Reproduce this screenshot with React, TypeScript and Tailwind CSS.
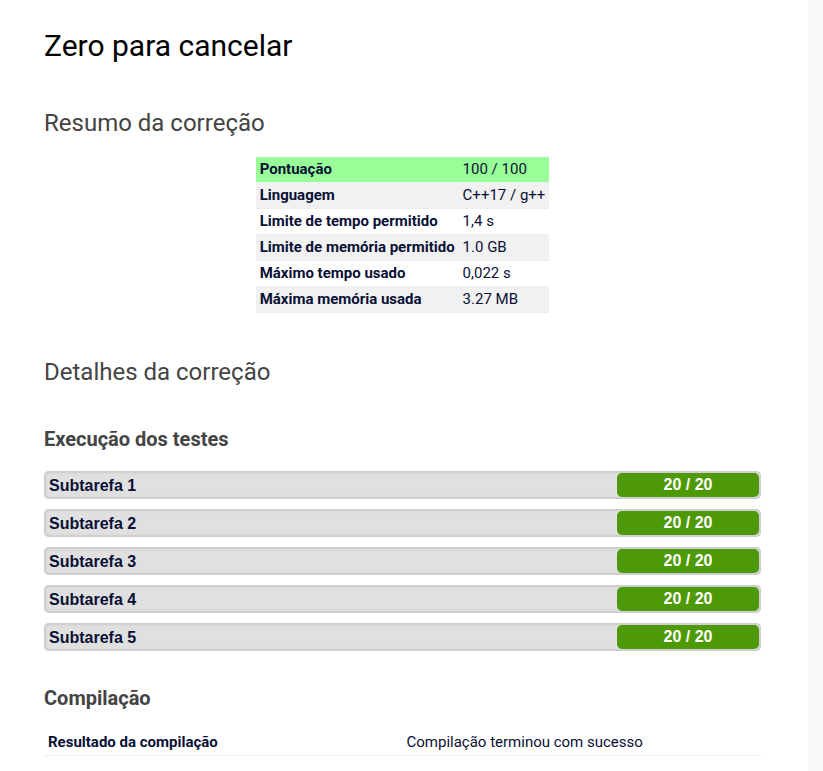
const summary = [
  { label: 'Pontuação', value: '100 / 100', row: 'bg-[#99ff99]', line: 'border-[#f1f1f1]' },
  { label: 'Linguagem', value: 'C++17 / g++', row: 'bg-[#f1f1f1]', line: 'border-[#eeeeee]' },
  { label: 'Limite de tempo permitido', value: '1,4 s', row: 'bg-white', line: 'border-[#eeeeee]' },
  { label: 'Limite de memória permitido', value: '1.0 GB', row: 'bg-[#f1f1f1]', line: 'border-[#eeeeee]' },
  { label: 'Máximo tempo usado', value: '0,022 s', row: 'bg-white', line: 'border-[#eeeeee]' },
  { label: 'Máxima memória usada', value: '3.27 MB', row: 'bg-[#f1f1f1]', line: 'border-[#eeeeee]' },
];

const subtasks = [1, 2, 3, 4, 5];

function Subtask({ number }: { number: number }) {
  return (
    <li className="flex h-7 items-center justify-between rounded-[5px] bg-[#e0e0e0] p-0.5 pl-[5px] font-['Liberation_Sans',sans-serif] text-base font-bold shadow-[inset_0_0_2px_2px_#cccccc]">
      <span className="pt-0.5 leading-6">Subtarefa {number}</span>
      <span className="h-6 w-1/5 rounded-[5px] bg-[#4e9a06] text-center leading-6 text-white">20 / 20</span>
    </li>
  );
}

export default function App() {
  return (
    <div className="min-h-screen bg-[#f8f8f8] pr-[15px] font-[Roboto,sans-serif] text-[15px] text-[#0a1035]">
      <main className="min-h-screen bg-white pt-6 pr-[47px] pb-[15px] pl-11">
        <h1 className="text-3xl leading-11 text-black">Zero para cancelar</h1>

        <h2 className="mt-[37px] text-2xl leading-9 text-[#444444]">Resumo da correção</h2>
        <table className="mx-auto mt-4 border-separate border-spacing-0">
          <tbody>
            {summary.map((item) => (
              <tr key={item.label} className={item.row}>
                <th scope="row" className={`border-b px-1 text-left leading-[25px] font-bold ${item.line}`}>
                  {item.label}
                </th>
                <td className={`border-b px-1 leading-[25px] ${item.line}`}>{item.value}</td>
              </tr>
            ))}
          </tbody>
        </table>

        <h2 className="mt-[41px] text-2xl leading-9 text-[#444444]">Detalhes da correção</h2>
        <h3 className="mt-[35px] text-xl leading-7 font-bold text-[#444444]">Execução dos testes</h3>
        <ul className="mt-[18px] flex flex-col gap-2.5">
          {subtasks.map((number) => (
            <Subtask key={number} number={number} />
          ))}
        </ul>

        <h3 className="mt-[33px] text-xl leading-7 font-bold text-[#444444]">Compilação</h3>
        <table className="mt-[18px] w-full table-fixed border-separate border-spacing-0">
          <tbody>
            <tr>
              <th scope="row" className="border-b border-[#eeeeee] px-1 text-left leading-[25px] font-bold">
                Resultado da compilação
              </th>
              <td className="border-b border-[#eeeeee] px-1 leading-[25px]">Compilação terminou com sucesso</td>
            </tr>
          </tbody>
        </table>
      </main>
    </div>
  );
}
